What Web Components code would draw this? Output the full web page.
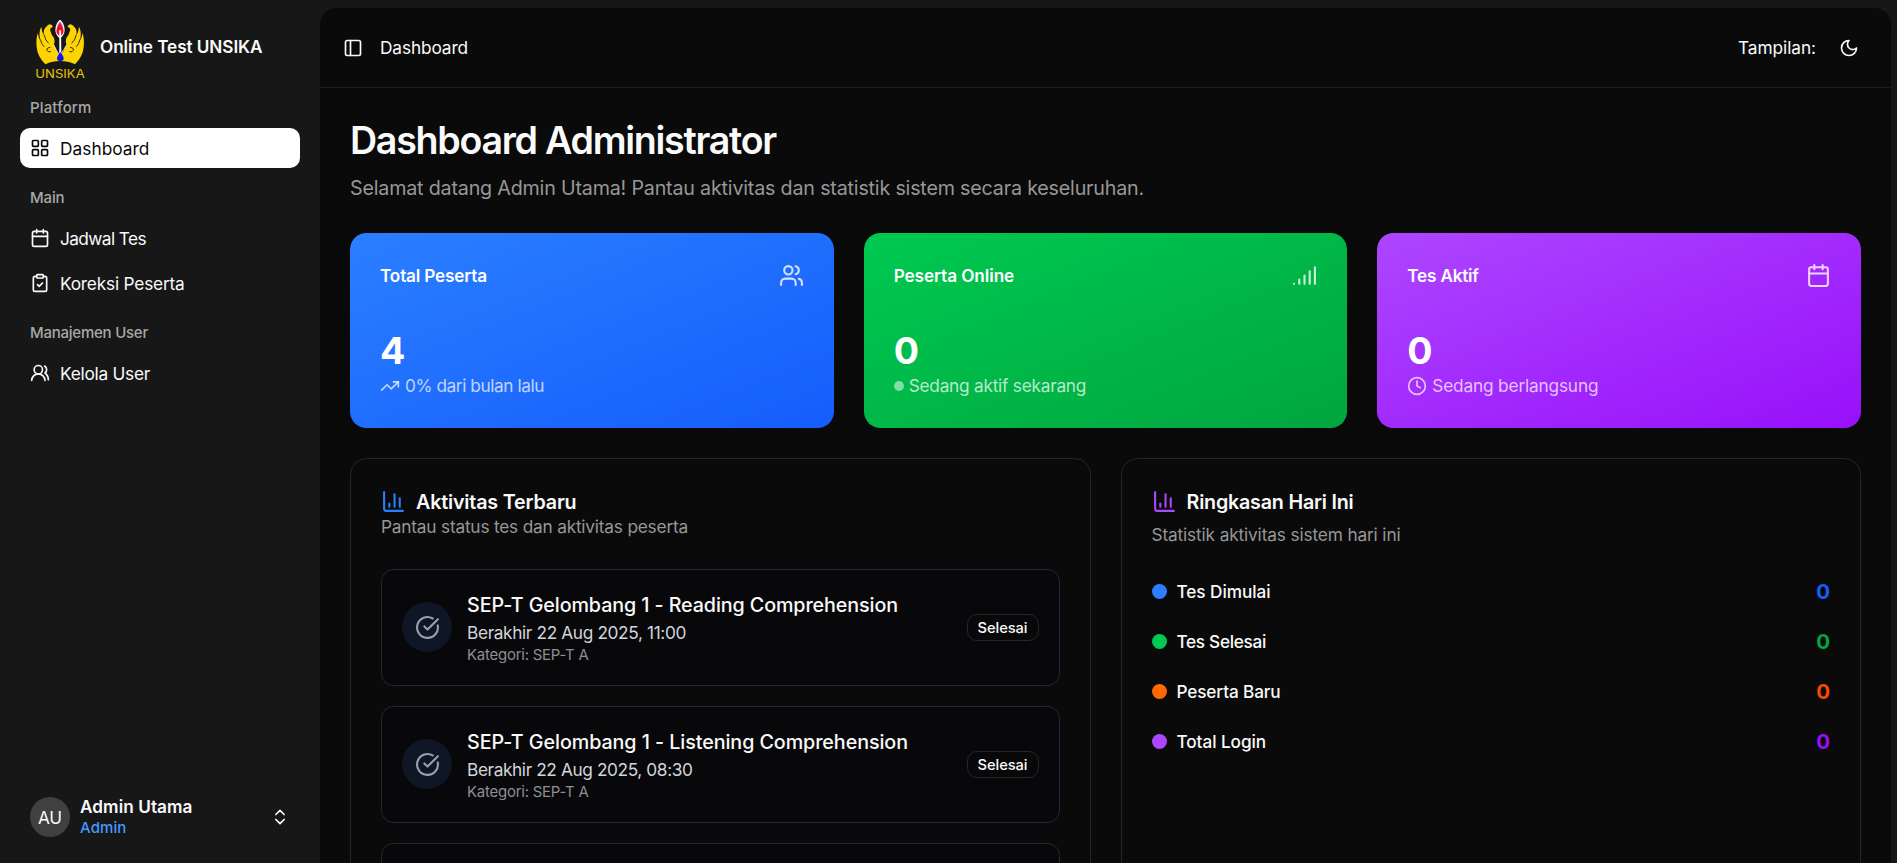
<!DOCTYPE html>
<html lang="id">
<head>
<meta charset="utf-8">
<title>Dashboard - Online Test UNSIKA</title>
<style>
html,body{margin:0;height:100%;background:#171717;overflow:hidden}
body{font-family:Inter,"Liberation Sans",sans-serif;color:#fafafa;font-size:17px}
</style>
</head>
<body>
<app-shell></app-shell>
<script>
const ICONS={
grid:'<rect width="7" height="7" x="3" y="3" rx="1"/><rect width="7" height="7" x="14" y="3" rx="1"/><rect width="7" height="7" x="14" y="14" rx="1"/><rect width="7" height="7" x="3" y="14" rx="1"/>',
calendar:'<path d="M8 2v4M16 2v4M3 10h18"/><rect width="18" height="18" x="3" y="4" rx="2"/>',
clipboard:'<rect width="8" height="4" x="8" y="2" rx="1"/><path d="M16 4h2a2 2 0 0 1 2 2v14a2 2 0 0 1-2 2H6a2 2 0 0 1-2-2V6a2 2 0 0 1 2-2h2"/><path d="m9 14 2 2 4-4"/>',
usersRound:'<path d="M18 21a8 8 0 0 0-16 0"/><circle cx="10" cy="8" r="5"/><path d="M22 20c0-3.37-2-6.5-4-8a5 5 0 0 0-.45-8.3"/>',
users:'<path d="M16 21v-2a4 4 0 0 0-4-4H6a4 4 0 0 0-4 4v2"/><circle cx="9" cy="7" r="4"/><path d="M22 21v-2a4 4 0 0 0-3-3.87M16 3.13a4 4 0 0 1 0 7.75"/>',
signal:'<path d="M2 20h.01M7 20v-4M12 20v-8M17 20V8M22 4v16"/>',
trend:'<path d="M22 7 13.5 15.5 8.5 10.5 2 17"/><path d="M16 7h6v6"/>',
clock:'<circle cx="12" cy="12" r="10"/><path d="M12 6v6l4 2"/>',
moon:'<path d="M12 3a6 6 0 0 0 9 9 9 9 0 1 1-9-9Z"/>',
panel:'<rect width="18" height="18" x="3" y="3" rx="2"/><path d="M9 3v18"/>',
chevrons:'<path d="m7 15 5 5 5-5M7 9l5-5 5 5"/>',
chart:'<path d="M3 3v16a2 2 0 0 0 2 2h16M18 17V9M13 17V5M8 17v-3"/>',
check:'<path d="M21.801 10A10 10 0 1 1 17 3.335"/><path d="m9 11 3 3L22 4"/>'
};
const define=(name,render,after)=>customElements.define(name,class extends HTMLElement{
  connectedCallback(){
    if(this.shadowRoot)return;
    this.attachShadow({mode:'open'}).innerHTML=render(this);
    if(after)after(this);
  }
});
const at=(el,n,d='')=>el.getAttribute(n)??d;

/* Line icon; "size" is the box in pixels. */
define('ui-icon',e=>`<style>:host{display:block;flex:none;width:${at(e,'size',20)}px;height:${at(e,'size',20)}px}svg{display:block;width:100%;height:100%}</style>
<svg viewBox="0 0 24 24" fill="none" stroke="currentColor" stroke-width="2" stroke-linecap="round" stroke-linejoin="round">${ICONS[at(e,'name')]}</svg>`);

/* One line of text whose tracking is adjusted so that it spans "w" pixels. */
define('ui-text',e=>`<style>:host{display:block;flex:none;white-space:nowrap;width:${at(e,'w')}px}span{display:inline-block}</style><span><slot></slot></span>`,
e=>{
  const s=e.shadowRoot.querySelector('span'),n=e.textContent.length;
  s.style.letterSpacing='0px';
  s.style.letterSpacing=((+at(e,'w')-s.getBoundingClientRect().width)/n).toFixed(3)+'px';
});

define('unsika-logo',()=>`<style>:host{display:block;flex:none;width:50px;height:60px}svg{display:block;width:100%;height:100%}</style>
<svg viewBox="45 30 150 180">
<defs><g id="wing"><path fill="#fdd401" d="M121 153Q97 153 76 163Q53 141 50 112Q47 86 54 68Q55 84 61 90Q55 66 64 50Q65 66 72 76Q67 54 88 43Q96 43 99 50Q88 54 91 62Q94 74 102 84Q106 94 102 104Q108 122 121 138Z"/>
<path fill="none" stroke="#171717" stroke-width="2.6" d="M61 88Q64 102 72 110M72 74Q76 92 86 100M91 112Q81 112 80 120Q84 128 93 125"/></g></defs>
<use href="#wing"/><use href="#wing" transform="translate(241 0) scale(-1 1)"/>
<path d="M101 105L119 138L140 105" fill="none" stroke="#e9e9f5" stroke-width="2.5"/>
<path d="M120 31Q133 43 132 63Q130 76 120 83Q110 76 108 63Q107 43 120 31Z" fill="#9b92e6" stroke="#fff" stroke-width="3.5"/>
<path d="M120 38Q132 54 130 69L120 78L110 69Q108 54 120 38Z" fill="#fa0a18"/>
<path d="M118 61h5l1 70h-6z" fill="#fff"/>
<path d="M121 126Q134 142 130 150Q121 158 112 150Q108 142 121 126Z" fill="#1015f0"/>
<text x="46" y="203" textLength="148" lengthAdjust="spacingAndGlyphs" font-family="Inter,sans-serif" font-size="34" font-weight="400" fill="#e6c405">UNSIKA</text>
</svg>`);

define('nav-label',()=>`<style>:host{display:flex;align-items:center;box-sizing:border-box;height:40px;padding:0 0 2px 10px;font-size:15px;font-weight:500;color:#a8a8a8}</style><slot></slot>`);
define('nav-item',e=>`<style>:host{display:flex;align-items:center;gap:10px;height:40px;padding-left:10px;border-radius:10px;font-size:17.3px;color:#fafafa}
:host([active]){background:#fff;color:#0a0a0a}</style><ui-icon name="${at(e,'icon')}"></ui-icon><slot></slot>`);
define('nav-group',()=>`<style>:host{display:flex;flex-direction:column;margin-bottom:10px}.items{display:flex;flex-direction:column;gap:5px}</style><slot name="label"></slot><div class="items"><slot></slot></div>`);

define('app-sidebar',()=>`<style>
:host{display:flex;flex-direction:column;width:280px;height:863px;padding:0 20px;flex:none}
.brand{display:flex;align-items:center;gap:15px;height:68px;padding:20px 0 0 15px;font-weight:600;font-size:17.2px}
.brand ui-text{margin-top:-16px}
.brand unsika-logo{margin-top:-9px}
.user{display:flex;align-items:center;gap:10px;height:40px;margin:auto 10px 26px}
.av{width:40px;height:40px;border-radius:50%;background:#404040;display:flex;align-items:center;justify-content:center;font-size:17.2px}
.av ui-text{padding-top:1px}
.who{flex:1;font-size:17.2px;font-weight:600;line-height:20px}.role{font-size:15px;font-weight:500;color:#4598ff;line-height:21px}
</style>
<div class="brand"><unsika-logo></unsika-logo><ui-text w="162.5">Online Test UNSIKA</ui-text></div>
<nav-group><nav-label slot="label"><ui-text w="61.5">Platform</ui-text></nav-label>
<nav-item active icon="grid"><ui-text w="89.5">Dashboard</ui-text></nav-item></nav-group>
<nav-group><nav-label slot="label"><ui-text w="34.5">Main</ui-text></nav-label>
<nav-item icon="calendar"><ui-text w="86">Jadwal Tes</ui-text></nav-item>
<nav-item icon="clipboard"><ui-text w="124.5">Koreksi Peserta</ui-text></nav-item></nav-group>
<nav-group><nav-label slot="label"><ui-text w="118">Manajemen User</ui-text></nav-label>
<nav-item icon="usersRound"><ui-text w="90">Kelola User</ui-text></nav-item></nav-group>
<div class="user"><div class="av"><ui-text w="24">AU</ui-text></div><div class="who"><ui-text w="112.5">Admin Utama</ui-text><ui-text class="role" w="46.5">Admin</ui-text></div><ui-icon name="chevrons"></ui-icon></div>`);

define('stat-card',e=>`<style>
:host{display:block;box-sizing:border-box;height:195px;padding:30px;border-radius:16.5px;background:linear-gradient(to bottom right,${at(e,'from')},${at(e,'to')});color:#fff;box-shadow:0 10px 15px -3px #0000001a}
.top{display:flex;justify-content:space-between;align-items:center;height:25px;font-size:17.2px;font-weight:600}
.top ui-icon{opacity:.8}
.num{margin-top:40px;font-size:37.5px;line-height:45px;font-weight:700;height:45px}
.sub{display:flex;align-items:center;gap:5px;height:25px;font-size:17.3px;color:#ffffffb8}
.dot{width:10px;height:10px;border-radius:50%;background:#ffffff80}
</style>
<div class="top"><slot name="title"></slot><ui-icon size="25" name="${at(e,'icon')}"></ui-icon></div>
<div class="num"><slot name="value"></slot></div>
<div class="sub">${at(e,'mark')?`<ui-icon name="${at(e,'mark')}"></ui-icon>`:'<div class="dot"></div>'}<slot name="note"></slot></div>`);

define('panel-card',e=>`<style>
:host{display:block;box-sizing:border-box;border:1px solid #262626;border-radius:16.5px;padding:30px;height:560px}
.head{display:flex;align-items:center;gap:10px;height:25px;font-size:19.7px;font-weight:600}
.head ui-icon{color:${at(e,'accent')}}
.desc{font-size:17.3px;line-height:25px;color:#979797;margin-top:${at(e,'gap',0)}px}
.body{margin-top:${at(e,'space')}px}
</style>
<div class="head"><ui-icon size="25" name="chart"></ui-icon><slot name="title"></slot></div>
<div class="desc"><slot name="desc"></slot></div><div class="body"><slot></slot></div>`);

define('status-badge',()=>`<style>:host{display:flex;box-sizing:border-box;width:72px;height:27px;align-items:center;justify-content:center;border:1px solid #262626;border-radius:10px;font-size:14.7px;font-weight:500;color:#fafafa}</style><ui-text w="50">Selesai</ui-text>`);
define('activity-item',e=>`<style>
:host{display:flex;box-sizing:border-box;align-items:center;height:117px;padding:0 20px;margin-bottom:20px;border:1px solid #1e2939;border-radius:12.5px;background:#08080a}
.ic{width:50px;height:50px;border-radius:50%;background:#0f1626;color:#99a1af;display:flex;align-items:center;justify-content:center;margin:-1px 15px 0 0}
.tx{flex:1}.t{font-size:19.7px;font-weight:500;line-height:31px;height:30px}.d{font-size:17.3px;line-height:25px;height:25px;color:#d1d5dc}.k{font-size:14.9px;line-height:20px;color:#8f8f92}
</style>${e.children.length?`
<div class="ic"><ui-icon size="25" name="check"></ui-icon></div>
<div class="tx"><div class="t"><slot name="t"></slot></div><div class="d"><slot name="d"></slot></div><div class="k"><slot name="k"></slot></div></div>
<status-badge></status-badge>`:''}`);
define('summary-row',e=>`<style>
:host{display:flex;align-items:center;height:30px;margin-bottom:20px;gap:10px;font-size:17.2px;font-weight:500}
i{width:15px;height:15px;border-radius:50%;background:${at(e,'dot')}}
b{margin-left:auto;font-size:20.5px;font-weight:700;color:${at(e,'color')}}
</style><i></i><slot></slot><b>0</b>`);

define('app-main',()=>`<style>
:host{display:block;box-sizing:border-box;width:1571px;height:855px;margin-top:8px;overflow:hidden;background:#0a0a0a;border-radius:16.5px 16.5px 0 0;flex:none}
header{display:flex;align-items:center;box-sizing:border-box;height:80px;padding:0 32px 0 23px;border-bottom:1px solid #1c1c1c;font-size:17.3px}
header ui-text:nth-of-type(1){margin-left:17px}header ui-text:nth-of-type(2){margin-left:auto;margin-right:23px}
main{padding:30px}
h1{margin:0;font-size:37.6px;line-height:45px;height:45px;font-weight:600}
.lead{font-size:19.7px;line-height:30px;color:#979797;margin:10px 0 30px}
.stats{display:grid;grid-template-columns:repeat(3,1fr);gap:30px}
.panels{display:grid;grid-template-columns:1fr 1fr;gap:30px;margin-top:30px}
</style>
<header><ui-icon name="panel"></ui-icon><ui-text w="88">Dashboard</ui-text><ui-text w="78">Tampilan:</ui-text><ui-icon name="moon"></ui-icon></header>
<main>
<h1><ui-text w="426">Dashboard Administrator</ui-text></h1>
<div class="lead"><ui-text w="794">Selamat datang Admin Utama! Pantau aktivitas dan statistik sistem secara keseluruhan.</ui-text></div>
<div class="stats">
<stat-card from="#2b7fff" to="#155dfc" icon="users" mark="trend"><ui-text slot="title" w="107">Total Peserta</ui-text><span slot="value">4</span><ui-text slot="note" w="139">0% dari bulan lalu</ui-text></stat-card>
<stat-card from="#00c951" to="#00a63e" icon="signal"><ui-text slot="title" w="120.5">Peserta Online</ui-text><span slot="value">0</span><ui-text slot="note" w="177.5">Sedang aktif sekarang</ui-text></stat-card>
<stat-card from="#ad46ff" to="#9810fa" icon="calendar" mark="clock"><ui-text slot="title" w="71.5">Tes Aktif</ui-text><span slot="value">0</span><ui-text slot="note" w="166">Sedang berlangsung</ui-text></stat-card>
</div>
<div class="panels">
<panel-card accent="#2b7fff" gap="0" space="30"><ui-text slot="title" w="160.5">Aktivitas Terbaru</ui-text><ui-text slot="desc" w="307">Pantau status tes dan aktivitas peserta</ui-text>
<activity-item><ui-text slot="t" w="431">SEP-T Gelombang 1 - Reading Comprehension</ui-text><ui-text slot="d" w="219">Berakhir 22 Aug 2025, 11:00</ui-text><ui-text slot="k" w="121.5">Kategori: SEP-T A</ui-text></activity-item>
<activity-item><ui-text slot="t" w="441">SEP-T Gelombang 1 - Listening Comprehension</ui-text><ui-text slot="d" w="225.5">Berakhir 22 Aug 2025, 08:30</ui-text><ui-text slot="k" w="121.5">Kategori: SEP-T A</ui-text></activity-item>
<activity-item></activity-item>
</panel-card>
<panel-card accent="#ad46ff" gap="8" space="29"><ui-text slot="title" w="167">Ringkasan Hari Ini</ui-text><ui-text slot="desc" w="249">Statistik aktivitas sistem hari ini</ui-text>
<summary-row dot="#2b7fff" color="#155dfc"><ui-text w="94">Tes Dimulai</ui-text></summary-row>
<summary-row dot="#00c951" color="#00a63e"><ui-text w="89.5">Tes Selesai</ui-text></summary-row>
<summary-row dot="#ff6900" color="#f54900"><ui-text w="104">Peserta Baru</ui-text></summary-row>
<summary-row dot="#ad46ff" color="#9810fa"><ui-text w="89.5">Total Login</ui-text></summary-row>
</panel-card>
</div>
</main>`);
define('app-shell',()=>`<style>:host{display:flex;width:1897px;height:863px;overflow:hidden}</style><app-sidebar></app-sidebar><app-main></app-main>`);
</script>
</body>
</html>
